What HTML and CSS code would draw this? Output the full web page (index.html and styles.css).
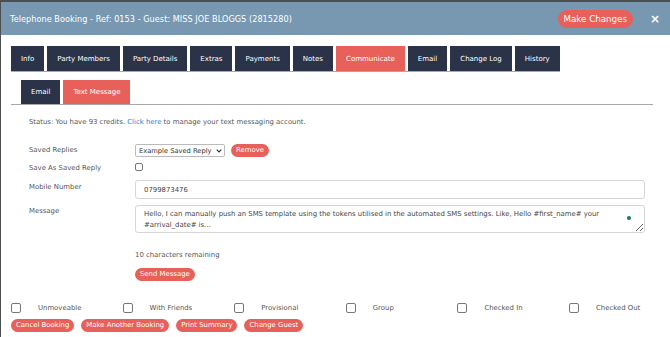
FILE: index.html
```html
<!DOCTYPE html>
<html lang="en">
<head>
  <meta charset="UTF-8">
  <title>Telephone Booking</title>
  <link rel="stylesheet" href="styles.css">
</head>
<body>
  <div class="modal">
    <header class="modal-header">
      <h1>Telephone Booking - Ref: 0153 - Guest: MISS JOE BLOGGS (2815280)</h1>
      <button class="pill pill-lg">Make Changes</button>
      <span class="close">&times;</span>
    </header>

    <div class="modal-body">
      <nav class="tabs">
        <a class="tab">Info</a>
        <a class="tab">Party Members</a>
        <a class="tab">Party Details</a>
        <a class="tab">Extras</a>
        <a class="tab">Payments</a>
        <a class="tab">Notes</a>
        <a class="tab active">Communicate</a>
        <a class="tab">Email</a>
        <a class="tab">Change Log</a>
        <a class="tab">History</a>
      </nav>

      <nav class="tabs subtabs">
        <a class="tab">Email</a>
        <a class="tab active">Text Message</a>
      </nav>

      <div class="pane">
        <p class="status">Status: You have 93 credits. <a href="#">Click here</a> to manage your text messaging account.</p>

        <div class="form-row row-replies">
          <label>Saved Replies</label>
          <span class="select-wrap">
            <select>
              <option>Example Saved Reply</option>
            </select>
            <svg class="chevron" width="6" height="4" viewBox="0 0 6 4"><path d="M0.7 0.7 L3 3 L5.3 0.7" fill="none" stroke="#333" stroke-width="1.2"/></svg>
          </span>
          <button class="pill">Remove</button>
        </div>

        <div class="form-row row-save">
          <label>Save As Saved Reply</label>
          <input type="checkbox" class="check">
        </div>

        <div class="form-row row-mobile">
          <label>Mobile Number</label>
          <input type="text" class="field" value="0799873476">
        </div>

        <div class="form-row row-message">
          <label>Message</label>
          <span class="area-wrap">
            <textarea class="field area">Hello, I can manually push an SMS template using the tokens utilised in the automated SMS settings. Like, Hello #first_name# your #arrival_date# is...</textarea>
            <span class="dot"></span>
          </span>
        </div>

        <div class="send">
          <p class="remaining">10 characters remaining</p>
          <button class="pill">Send Message</button>
        </div>
      </div>

      <div class="flags">
        <label class="flag"><input type="checkbox" class="check big"><span>Unmoveable</span></label>
        <label class="flag"><input type="checkbox" class="check big"><span>With Friends</span></label>
        <label class="flag"><input type="checkbox" class="check big"><span>Provisional</span></label>
        <label class="flag"><input type="checkbox" class="check big"><span>Group</span></label>
        <label class="flag"><input type="checkbox" class="check big"><span>Checked In</span></label>
        <label class="flag"><input type="checkbox" class="check big"><span>Checked Out</span></label>
      </div>

      <div class="actions">
        <button class="pill">Cancel Booking</button>
        <button class="pill">Make Another Booking</button>
        <button class="pill">Print Summary</button>
        <button class="pill">Change Guest</button>
      </div>
    </div>
  </div>
</body>
</html>
```

FILE: styles.css
```css
:root {
  --header-color: #7897b1;
  --tab-color: #2b3349;
  --red: #e8605a;
  --label-color: #555555;
  --line-color: #a9a9a9;
}

* {
  box-sizing: border-box;
  margin: 0;
  padding: 0;
}

body {
  background-color: #4e4e4e;
  font-family: "DejaVu Sans", sans-serif;
  height: 337px;
  overflow: hidden;
}

.modal {
  margin: 2px 0 0 1px;
  background-color: #ffffff;
  height: 335px;
}

.modal-header {
  display: flex;
  align-items: center;
  height: 33px;
  padding: 0 10px 0 9px;
  background-color: var(--header-color);
}

.modal-header h1 {
  flex: 1;
  color: #ffffff;
  font-size: 8.15px;
  font-weight: normal;
  letter-spacing: 0.05px;
}

.pill {
  font-family: inherit;
  background-color: var(--red);
  color: #ffffff;
  border: none;
  border-radius: 8px;
  height: 13px;
  padding: 0 5px;
  font-size: 6.9px;
  line-height: 13px;
  white-space: nowrap;
  cursor: pointer;
}

.pill-lg {
  height: 18px;
  border-radius: 9px;
  padding: 0 6px;
  font-size: 8.7px;
  line-height: 18px;
}

.close {
  margin-left: 17px;
  color: #ffffff;
  font-size: 12px;
  font-weight: bold;
  line-height: 1;
}

.modal-body {
  padding: 11px 0 0 10px;
}

.tabs {
  display: flex;
  gap: 3px;
  width: fit-content;
  border-bottom: 1px solid var(--line-color);
}

.tab {
  display: flex;
  align-items: center;
  flex-shrink: 0;
  height: 25px;
  padding: 0 10px;
  background-color: var(--tab-color);
  color: #ffffff;
  font-size: 7px;
  white-space: nowrap;
}

.tab.active {
  background-color: var(--red);
}

.subtabs {
  width: 642px;
  margin-top: 8px;
  padding-left: 10px;
}

.subtabs .tab {
  height: 24px;
}

.pane {
  width: 642px;
  padding: 0 8px 0 18px;
  color: var(--label-color);
  font-size: 6.9px;
}

.status {
  margin-top: 12px;
  line-height: 10px;
}

.status a {
  color: #2f7fd6;
  text-decoration: none;
}

.form-row {
  display: flex;
  align-items: flex-start;
}

.form-row label {
  width: 106px;
  flex-shrink: 0;
  line-height: 13px;
}

.row-replies {
  margin-top: 17px;
  align-items: center;
}

.select-wrap {
  position: relative;
  display: inline-block;
}

.select-wrap select {
  appearance: none;
  width: 90px;
  height: 13px;
  padding: 0 0 0 3px;
  border: 1px solid #bbbbbb;
  border-radius: 2px;
  background: #ffffff;
  color: #333333;
  font-family: inherit;
  font-size: 6.7px;
}

.chevron {
  position: absolute;
  right: 3px;
  top: 5px;
}

.row-replies .pill {
  margin-left: 6px;
}

.row-save {
  margin-top: 5px;
}

.row-save label {
  line-height: 12px;
}

.check {
  appearance: none;
  width: 8px;
  height: 8px;
  border: 1px solid #777777;
  border-radius: 2px;
  background: #ffffff;
  margin-top: 1px;
}

.check.big {
  width: 10px;
  height: 10px;
  margin: 0;
}

.row-mobile {
  margin-top: 6px;
}

.row-mobile label {
  padding-top: 1px;
}

.field {
  flex: 1;
  height: 19px;
  padding: 0 8px;
  border: 1px solid #d6d6d6;
  border-radius: 3px;
  color: #444444;
  font-family: inherit;
  font-size: 6.9px;
  outline: none;
}

.row-message {
  margin-top: 6px;
}

.area-wrap {
  position: relative;
  flex: 1;
  display: flex;
}

.area {
  height: 28px;
  padding: 3px 36px 0 8px;
  line-height: 11px;
  resize: vertical;
  overflow: hidden;
}

.dot {
  position: absolute;
  right: 14px;
  top: 11px;
  width: 4px;
  height: 4px;
  border-radius: 50%;
  background-color: #0f7a6c;
}

.send {
  margin-left: 106px;
}

.remaining {
  margin-top: 17px;
  line-height: 10px;
}

.send .pill {
  margin-top: 8px;
}

.flags {
  display: grid;
  grid-template-columns: repeat(6, 111.6px);
  margin-top: 21px;
  font-size: 6.9px;
}

.flag {
  display: flex;
  align-items: center;
  gap: 17px;
  height: 11px;
  color: #555555;
}

.actions {
  display: flex;
  gap: 7px;
  margin-top: 6px;
}
```
